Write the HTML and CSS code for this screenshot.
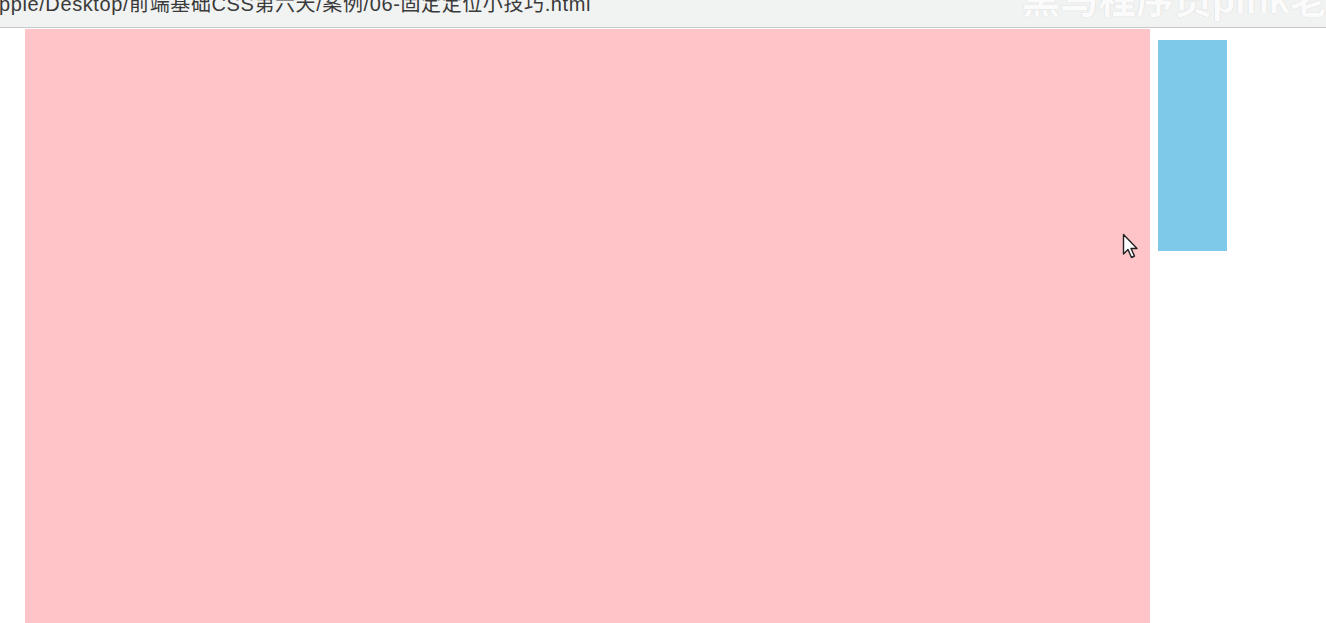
FILE: index.html
```html
<!DOCTYPE html>
<html>
<head>
<meta charset="utf-8">
<link rel="stylesheet" href="styles.css">
</head>
<body>
<div class="addr">
  <span class="url">pple/Desktop/前端基础CSS第六天/案例/06-固定定位小技巧.html</span>
  <span class="mark">黑马程序员pink老师</span>
</div>
<div class="stage">
  <div class="w"></div>
  <div class="fixed"></div>
  <svg class="cursor" width="20" height="28" viewBox="0 0 20 28">
    <path d="M1.5 1.5 L1.5 21 L6 16.5 L9.5 24.5 L12.5 23 L9 15.5 L15 15.5 Z" fill="#fff" stroke="#222" stroke-width="1.4" stroke-linejoin="round"/>
  </svg>
</div>
</body>
</html>
```
FILE: styles.css
```css
html, body {
  margin: 0;
  padding: 0;
  background: #fff;
  overflow: hidden;
  height: 623px;
}
.addr {
  height: 27px;
  background: #f1f2f2;
  border-bottom: 1px solid #c9c9c9;
  position: relative;
  overflow: hidden;
  display: flex;
  justify-content: space-between;
}
.url {
  font-family: "Liberation Sans", "Noto Sans CJK SC", sans-serif;
  font-size: 20px;
  letter-spacing: 0.6px;
  color: #3a3a3a;
  line-height: 20px;
  margin-top: -6px;
  margin-left: -1px;
  white-space: nowrap;
}
.mark {
  font-family: "Liberation Sans", "Noto Sans CJK SC", sans-serif;
  font-size: 38px;
  font-weight: bold;
  color: #fbfbfb;
  text-shadow: 0 0 1px #c8c8c8;
  line-height: 38px;
  margin-top: -19px;
  margin-right: -40px;
  white-space: nowrap;
}
.stage {
  position: relative;
  display: flex;
  align-items: flex-start;
  gap: 8px;
  padding-left: 25px;
  padding-top: 1px;
}
.w {
  width: 1125px;
  height: 600px;
  background: #ffc4c8;
}
.fixed {
  width: 69px;
  height: 211px;
  margin-top: 11px;
  background: #7ec9e9;
}
.cursor {
  position: absolute;
  left: 1122px;
  top: 205px;
}
```
